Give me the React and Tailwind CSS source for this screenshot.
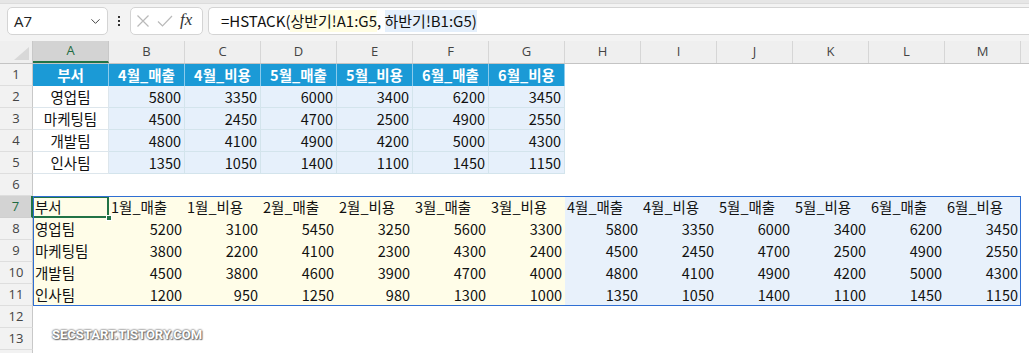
import React from "react";
import { ChevronDown } from "lucide-react";

const COLS = ["A", "B", "C", "D", "E", "F", "G", "H", "I", "J", "K", "L", "M"];

const TOP = [
  ["부서", "4월_매출", "4월_비용", "5월_매출", "5월_비용", "6월_매출", "6월_비용"],
  ["영업팀", 5800, 3350, 6000, 3400, 6200, 3450],
  ["마케팅팀", 4500, 2450, 4700, 2500, 4900, 2550],
  ["개발팀", 4800, 4100, 4900, 4200, 5000, 4300],
  ["인사팀", 1350, 1050, 1400, 1100, 1450, 1150],
];

const SPILL = [
  ["부서", "1월_매출", "1월_비용", "2월_매출", "2월_비용", "3월_매출", "3월_비용", "4월_매출", "4월_비용", "5월_매출", "5월_비용", "6월_매출", "6월_비용"],
  ["영업팀", 5200, 3100, 5450, 3250, 5600, 3300, 5800, 3350, 6000, 3400, 6200, 3450],
  ["마케팅팀", 3800, 2200, 4100, 2300, 4300, 2400, 4500, 2450, 4700, 2500, 4900, 2550],
  ["개발팀", 4500, 3800, 4600, 3900, 4700, 4000, 4800, 4100, 4900, 4200, 5000, 4300],
  ["인사팀", 1200, 950, 1250, 980, 1300, 1000, 1350, 1050, 1400, 1100, 1450, 1150],
];

const cellFont = { fontFamily: '"Noto Sans CJK KR", "Noto Sans", sans-serif' };

// row number on the left
const RowHead = ({ n, active }) => (
  <div
    className={`w-[33px] h-[22px] shrink-0 flex items-center justify-center text-[13px] border-b border-r ${
      active
        ? "bg-[#d3d3d3] text-[#1e6b41] border-b-[#cfcfcf] border-r-[#217346] border-r-2"
        : "bg-[#f2f2f2] text-[#444] border-b-[#dedede] border-r-[#c8c8c8]"
    }`}
    style={{ fontFamily: '"Open Sans", "Noto Sans", sans-serif' }}
  >
    {n}
  </div>
);

const Cell = ({ className = "", children }) => (
  <div className={`w-[76px] h-[22px] shrink-0 flex items-center text-[14.5px] text-[#111] whitespace-nowrap ${className}`}>
    {children}
  </div>
);

const EmptyRow = ({ n }) => (
  <div className="flex">
    <RowHead n={n} />
    <div className="flex-1 bg-white" />
  </div>
);

export default function App() {
  return (
    <div className="w-[1029px] h-[353px] overflow-hidden bg-white" style={cellFont}>
      {/* formula bar */}
      <div className="h-[41px] bg-[#f3f3f3] relative">
        <div className="h-[4px] bg-[#e6e6e6] border-b border-[#dcdcdc]" />
        <div className="flex items-start pt-[3px]">
          <div className="ml-[7px] w-[101px] h-[28px] bg-white border border-[#d4d4d4] rounded-[5px] flex items-center justify-between pl-[6px] pr-[4px]">
            <span className="text-[15px] text-[#222]" style={{ fontFamily: '"Open Sans", sans-serif' }}>A7</span>
            <ChevronDown size={15} strokeWidth={1.6} color="#444" />
          </div>
          <div className="w-[22px] h-[28px] flex flex-col items-center justify-center gap-[2px]">
            <span className="w-[2px] h-[2px] bg-[#333]" />
            <span className="w-[2px] h-[2px] bg-[#333]" />
            <span className="w-[2px] h-[2px] bg-[#333]" />
          </div>
          <div className="w-[73px] h-[28px] bg-white border border-[#d4d4d4] rounded-[5px] flex items-center pl-[5px] gap-[7px]">
            <svg width="14" height="14" viewBox="0 0 14 14">
              <path d="M1.5 1.5 L12.5 12.5 M12.5 1.5 L1.5 12.5" stroke="#b9b9b9" strokeWidth="1.2" fill="none" />
            </svg>
            <svg width="16" height="14" viewBox="0 0 16 14">
              <path d="M1 7.5 L5.5 12 L15 2" stroke="#b9b9b9" strokeWidth="1.2" fill="none" />
            </svg>
            <span className="text-[17px] italic text-[#333] leading-none -mt-[3px]" style={{ fontFamily: '"Liberation Serif", serif' }}>
              fx
            </span>
          </div>
          <div className="ml-[5px] flex-1 h-[28px] bg-white border border-r-0 border-[#d4d4d4] rounded-l-[5px] flex items-center pl-[12px] text-[15px] text-[#111]">
            <span>=HSTACK(</span>
            <span className="bg-[#fffde3]">상반기!A1:G5</span>
            <span>,&nbsp;</span>
            <span className="bg-[#e4effb]">하반기!B1:G5</span>
            <span className="bg-[#e4effb]">)</span>
          </div>
        </div>
      </div>

      {/* column headers */}
      <div className="flex h-[23px] bg-[#efefef] border-b border-[#c4c4c4]">
        <div className="w-[33px] shrink-0 border-r border-[#c8c8c8] flex items-end justify-end pr-[3px] pb-[3px]">
          <svg width="15" height="13" viewBox="0 0 15 13">
            <path d="M15 0 L15 13 L0 13 Z" fill="#d8d8d8" />
          </svg>
        </div>
        {COLS.map((c, i) => (
          <div
            key={c}
            className={`w-[76px] shrink-0 flex items-center justify-center text-[13px] border-r ${
              i === 0
                ? "bg-[#d3d3d3] text-[#1e6b41] border-r-[#c8c8c8] border-b-2 border-b-[#217346]"
                : "text-[#444] border-r-[#d6d6d6]"
            }`}
            style={{ fontFamily: '"Open Sans", "Noto Sans", sans-serif' }}
          >
            {c}
          </div>
        ))}
        <div className="flex-1" />
      </div>

      <div className="relative">
        {/* top table */}
        {TOP.map((row, r) => (
          <div key={r} className="flex">
            <RowHead n={r + 1} />
            {row.map((v, c) =>
              r === 0 ? (
                <Cell key={c} className="justify-center bg-[#1b9ad6] text-white font-bold border-r border-r-[#8ccbec]">
                  <span className="text-white">{v}</span>
                </Cell>
              ) : c === 0 ? (
                <Cell key={c} className="justify-center bg-white border-r border-b border-[#dde6ec]">
                  {v}
                </Cell>
              ) : (
                <Cell key={c} className="justify-end pr-[3px] bg-[#e6f0fb] border-r border-b border-[#d3e4ec]">
                  {v}
                </Cell>
              )
            )}
            <div className="flex-1 bg-white" />
          </div>
        ))}

        <EmptyRow n={6} />

        {/* spilled range */}
        {SPILL.map((row, r) => (
          <div key={r} className="flex">
            <RowHead n={r + 7} active={r === 0} />
            {row.map((v, c) => (
              <Cell
                key={c}
                className={`${c < 7 ? "bg-[#fffde8]" : "bg-[#e8f1fb]"} ${
                  r === 0 || c === 0 ? "justify-start pl-[2px]" : "justify-end pr-[3px]"
                } ${r === 0 && c === 0 ? "relative" : ""}`}
              >
                {v}
                {r === 0 && c === 0 && (
                  <>
                    <div className="absolute inset-0 -left-px border-2 border-[#217346]" />
                    <div className="absolute -right-[3px] -bottom-[3px] w-[6px] h-[6px] bg-[#217346] border border-white" />
                  </>
                )}
              </Cell>
            ))}
            <div className="flex-1 bg-white" />
          </div>
        ))}

        <EmptyRow n={12} />
        <EmptyRow n={13} />
        <EmptyRow n="" />

        {/* spill border */}
        <div className="absolute left-[33px] top-[132px] w-[988px] h-[110px] border border-[#2f6fd3] pointer-events-none" />

        {/* watermark */}
        <div
          className="absolute left-[52px] top-[261px] text-[13px] font-bold text-white"
          style={{
            fontFamily: 'Roboto, "Liberation Sans", sans-serif',
            textShadow: "0 0 2px #666, 0 0 2px #666, 1px 1px 1px #777",
          }}
        >
          SECSTART.TISTORY.COM
        </div>
      </div>
    </div>
  );
}
